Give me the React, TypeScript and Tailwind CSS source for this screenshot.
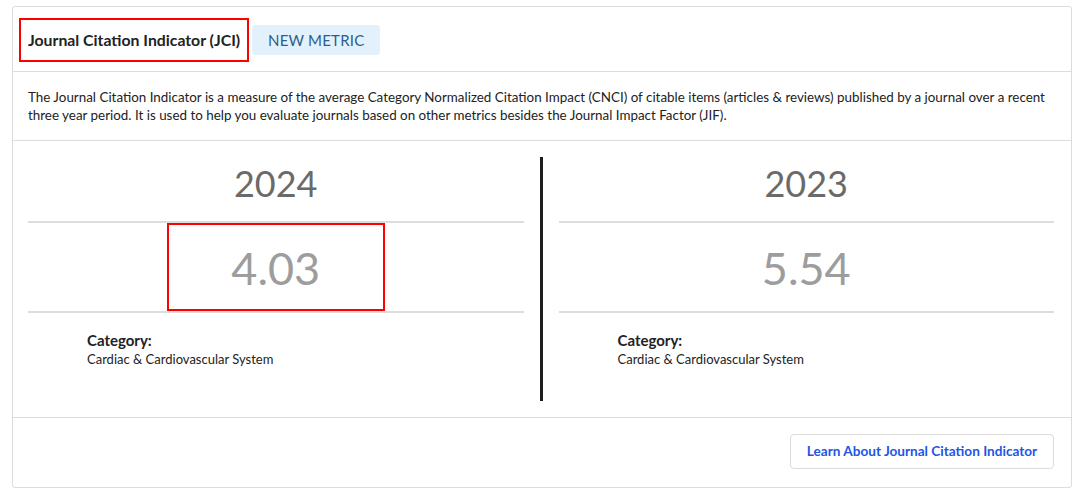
import React from "react";

type Year = { year: string; value: string; category: string; highlight?: boolean };

const years: Year[] = [
  { year: "2024", value: "4.03", category: "Cardiac & Cardiovascular System", highlight: true },
  { year: "2023", value: "5.54", category: "Cardiac & Cardiovascular System" },
];

function YearColumn({ y }: { y: Year }) {
  return (
    <div className="flex-1 flex flex-col">
      <div className="h-[64px] flex items-center justify-center pb-[13px] text-[36px] leading-none text-[#6a6a6a]">
        {y.year}
      </div>
      <div className="border-t-2 border-b-2 border-[#dddddd] h-[92px] flex justify-center">
        <div
          className={
            "w-[218px] h-full flex items-center justify-center pt-[2px] text-[45px] leading-none text-[#9d9d9d] " +
            (y.highlight ? "border-2 border-[#ff0000]" : "")
          }
        >
          {y.value}
        </div>
      </div>
      <div className="pl-[59px] pt-[17px]">
        <div className="text-[15px] font-bold text-[#222] leading-[20px]">Category:</div>
        <div className="text-[13px] text-[#222] leading-[18px]">{y.category}</div>
      </div>
    </div>
  );
}

export default function App() {
  return (
    <div
      className="bg-white w-[1090px] h-[498px] pl-[12px] pt-[6px]"
      style={{ fontFamily: "Lato, 'Noto Sans', sans-serif" }}
    >
      <div className="w-[1060px] h-[482px] border border-[#dcdcdc] rounded-[3px] flex flex-col">
        {/* header */}
        <div className="h-[65px] border-b border-[#dcdcdc] flex items-center pl-[6px] pt-[2px] gap-[3px]">
          <div className="h-[44px] border-2 border-[#ff0000] px-[7px] flex items-center text-[15.8px] font-bold text-[#222]">
            Journal Citation Indicator (JCI)
          </div>
          <div className="h-[30px] w-[128px] rounded-[3px] bg-[#e2f1fc] flex items-center justify-center text-[15px] text-[#2b5e8f] tracking-[0.2px]">
            NEW METRIC
          </div>
        </div>

        {/* description */}
        <div className="h-[69px] border-b border-[#dcdcdc] pl-[15px] pr-[24px] pt-[16px] text-[13.4px] leading-[18px] text-[#222]">
          The Journal Citation Indicator is a measure of the average Category Normalized Citation Impact (CNCI) of citable items (articles &amp; reviews) published by a journal over a recent three year period. It is used to help you evaluate journals based on other metrics besides the Journal Impact Factor (JIF).
        </div>

        {/* years */}
        <div className="h-[277px] border-b border-[#dcdcdc] flex px-[15px] py-[16px]">
          <YearColumn y={years[0]} />
          <div className="w-[3px] bg-[#1e1e1e] mx-[16px]" />
          <YearColumn y={years[1]} />
          <div className="w-[2px]" />
        </div>

        {/* footer */}
        <div className="flex-1 flex justify-end items-start pt-[16px] pr-[17px]">
          <button className="h-[35px] w-[264px] border border-[#dcdcdc] rounded-[4px] bg-white text-[13.6px] font-bold text-[#1d55e6]">
            Learn About Journal Citation Indicator
          </button>
        </div>
      </div>
    </div>
  );
}
